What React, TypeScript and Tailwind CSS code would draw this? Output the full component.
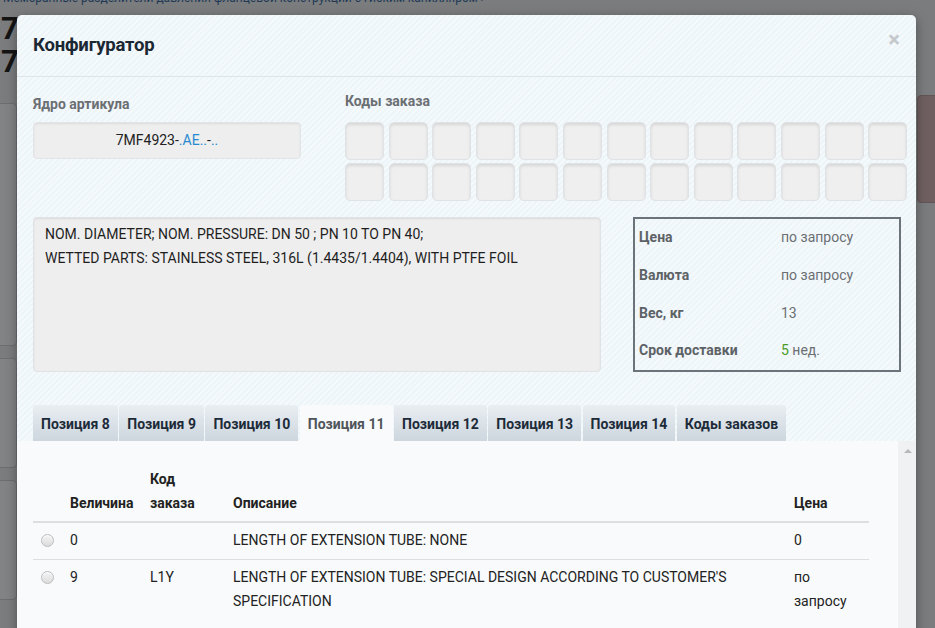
import React from "react";

const tabs = ["Позиция 8", "Позиция 9", "Позиция 10", "Позиция 11", "Позиция 12", "Позиция 13", "Позиция 14", "Коды заказов"];

function Radio() {
  return (
    <span className="inline-block w-[13px] h-[13px] rounded-full border border-[#b9bdc0] bg-[linear-gradient(#f4f4f4,#dcdcdc)] shadow-[inset_0_1px_1px_rgba(255,255,255,0.8)]" />
  );
}

export default function App() {
  return (
    <div
      className="relative w-[935px] h-[628px] overflow-hidden bg-[#7a7c7d]"
      style={{ fontFamily: "Roboto, 'Noto Sans', sans-serif" }}
    >
      {/* page under overlay */}
      <div className="flex flex-col">
        <div className="-mt-[9px] pl-[3px] text-[12px] leading-[14px] text-[#1f3a58] whitespace-nowrap">
          Мембранные разделители давления фланцевой конструкции с гибким капилляром ›
        </div>
        <div className="mt-[7px] pl-[1px] text-[31px] font-bold leading-[33px] text-[#141414] whitespace-nowrap">
          <div>7</div>
          <div>7</div>
        </div>
        <div className="flex justify-between mt-[25px]">
          <div className="flex flex-col -ml-[10px] w-[27px] gap-[12px]">
            <div className="h-[243px] rounded-[4px] border border-[#6c6e6f] bg-[#818384]" />
            <div className="h-[110px] rounded-[4px] border border-[#6c6e6f] bg-[#818384]" />
            <div className="h-[120px] rounded-[4px] border border-[#6c6e6f] bg-[#818384]" />
          </div>
          <div className="-mr-[10px] -mt-[8px] w-[28px] h-[108px] rounded-[4px] bg-[#6f5f60] border border-[#635556]" />
        </div>
      </div>

      {/* modal */}
      <div className="absolute left-[17px] top-[15px] w-[899px] h-[640px] rounded-t-[5px] shadow-[0_3px_12px_rgba(0,0,0,0.35)] bg-[#f0f6fa] bg-[repeating-linear-gradient(-45deg,#eef5f9_0px,#eef5f9_2px,#f4f9fc_2px,#f4f9fc_4px)] flex flex-col">
        {/* header */}
        <div className="h-[62px] flex items-center justify-between pl-[16px] pr-[16px] border-b border-[#dde5eb]">
          <div className="text-[18.5px] font-bold text-[#1b2733] tracking-[-0.2px] mt-[1px]">Конфигуратор</div>
          <div className="text-[22px] leading-none text-[#c3c8cc] font-bold -mt-[12px]">×</div>
        </div>

        {/* body */}
        <div className="flex flex-col pl-[16px] pt-[15px]">
          <div className="flex">
            <div className="flex flex-col w-[268px]">
              <div className="mt-[3px] text-[14px] leading-[18px] font-bold text-[#6b6f73]">Ядро артикула</div>
              <div className="mt-[9px] h-[37px] rounded-[4px] bg-[#eeeeee] border border-[#e2e5e7] shadow-[inset_0_1px_2px_rgba(0,0,0,0.08)] flex items-center justify-center text-[14px] text-[#222]">
                <span>7MF4923-</span>
                <span className="text-[#2a8ad0]">.AE..</span>
                <span>-</span>
                <span className="text-[#2a8ad0]">..</span>
              </div>
            </div>
            <div className="flex flex-col ml-[44px]">
              <div className="text-[14px] leading-[18px] font-bold text-[#6b6f73]">Коды заказа</div>
              <div className="mt-[12px] grid grid-cols-[repeat(13,39px)] gap-x-[4.6px] gap-y-[3px]">
                {Array.from({ length: 26 }).map((_, i) => (
                  <div
                    key={i}
                    className="h-[38px] rounded-[5px] bg-[#efefef] border border-[#e0e3e5] shadow-[inset_0_2px_3px_rgba(0,0,0,0.10)]"
                  />
                ))}
              </div>
            </div>
          </div>

          <div className="flex mt-[16px]">
            <div className="w-[568px] h-[155px] rounded-[4px] bg-[#eeeeee] border border-[#dfe3e6] shadow-[inset_0_1px_2px_rgba(0,0,0,0.08)] pl-[11px] pt-[4px] text-[14px] leading-[24px] text-[#1e1e1e]">
              <div>NOM. DIAMETER; NOM. PRESSURE: DN 50 ; PN 10 TO PN 40;</div>
              <div>WETTED PARTS: STAINLESS STEEL, 316L (1.4435/1.4404), WITH PTFE FOIL</div>
            </div>
            <div className="ml-[32px] w-[268px] h-[155px] border-2 border-[#6c747b] flex flex-col pl-[4px]">
              {[
                ["Цена", <span>по запросу</span>],
                ["Валюта", <span>по запросу</span>],
                ["Вес, кг", <span>13</span>],
                ["Срок доставки", <span><span className="text-[#4a9a25]">5</span> нед.</span>],
              ].map(([k, v], i) => (
                <div key={i} className="flex items-center h-[37.7px] text-[14px]">
                  <div className="w-[142px] font-bold text-[#5d6266]">{k}</div>
                  <div className="text-[#6b6f73]">{v}</div>
                </div>
              ))}
            </div>
          </div>

          {/* tabs */}
          <div className="flex gap-[1.5px] mt-[33px]">
            {tabs.map((t, i) => {
              const active = i === 3;
              return (
                <div
                  key={t}
                  className={
                    active
                      ? "h-[36px] px-[8px] pt-[3px] flex items-center rounded-t-[3px] bg-[#f8fafb] text-[14px] font-bold text-[#4f555a] whitespace-nowrap"
                      : "h-[36px] px-[8px] pt-[3px] flex items-center rounded-t-[3px] bg-[linear-gradient(#e9eef2,#cdd6de)] text-[14px] font-bold text-[#1d2b39] whitespace-nowrap"
                  }
                >
                  {t}
                </div>
              );
            })}
          </div>
        </div>

        {/* tab panel */}
        <div className="flex flex-1">
          <div className="flex-1 bg-[#f8fafb] pl-[16px] pr-[29px] pt-[26px]">
            <div className="text-[14px] text-[#222]">
              <div className="flex items-end pb-[6px] border-b-2 border-[#dcdfe1] font-bold leading-[24px]">
                <div className="w-[37px]" />
                <div className="w-[80px]">Величина</div>
                <div className="w-[83px]">Код<br />заказа</div>
                <div className="w-[561px]">Описание</div>
                <div className="flex-1">Цена</div>
              </div>
              <div className="flex items-start pt-[5px] pb-[7px] border-b border-[#dcdfe1] leading-[24px]">
                <div className="w-[37px] flex justify-center pt-[6px] -ml-[4px] mr-[4px]"><Radio /></div>
                <div className="w-[80px]">0</div>
                <div className="w-[83px]"></div>
                <div className="w-[561px]">LENGTH OF EXTENSION TUBE: NONE</div>
                <div className="flex-1">0</div>
              </div>
              <div className="flex items-start pt-[5px] pb-[7px] leading-[24px]">
                <div className="w-[37px] flex justify-center pt-[6px] -ml-[4px] mr-[4px]"><Radio /></div>
                <div className="w-[80px]">9</div>
                <div className="w-[83px]">L1Y</div>
                <div className="w-[561px] pr-[16px]">LENGTH OF EXTENSION TUBE: SPECIAL DESIGN ACCORDING TO CUSTOMER'S SPECIFICATION</div>
                <div className="flex-1 pr-[10px]">по запросу</div>
              </div>
            </div>
          </div>
          <div className="w-[18px] bg-[#eff1f2] flex justify-center pt-[8px] pl-[2px]">
            <div className="w-0 h-0 border-l-[4px] border-r-[4px] border-b-[4px] border-l-transparent border-r-transparent border-b-[#b5b9bc]" />
          </div>
        </div>
      </div>
    </div>
  );
}
